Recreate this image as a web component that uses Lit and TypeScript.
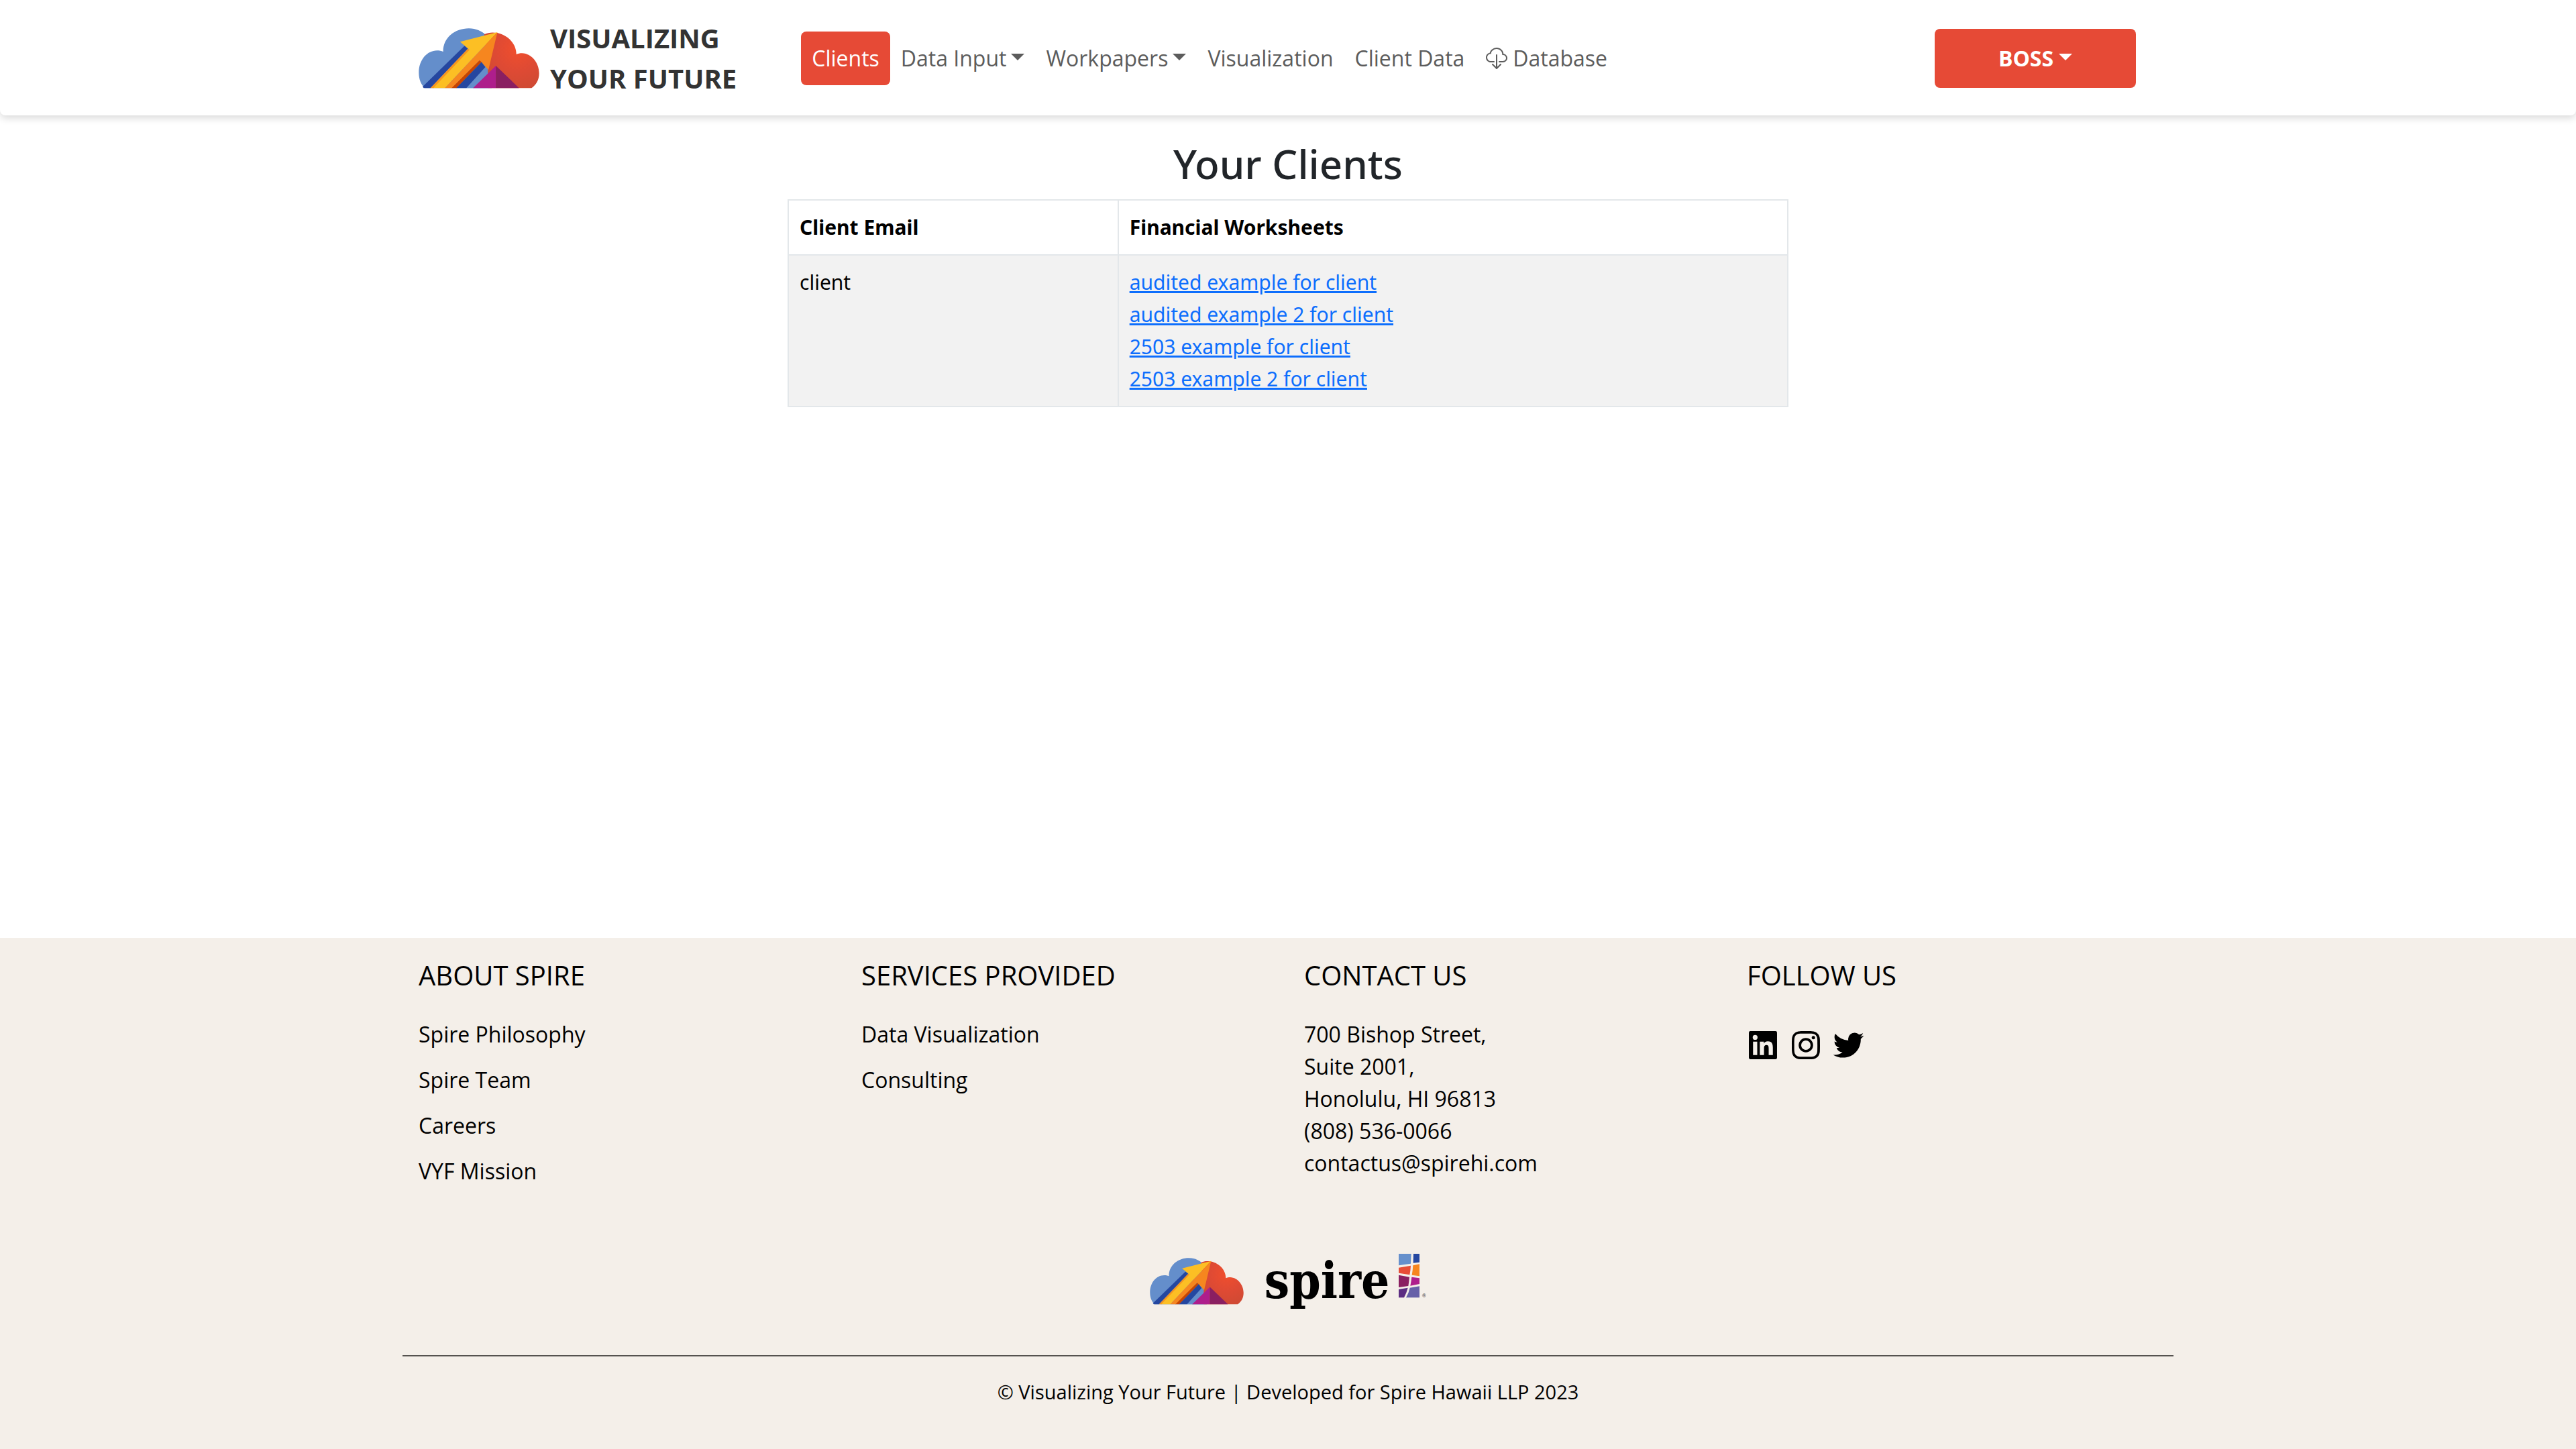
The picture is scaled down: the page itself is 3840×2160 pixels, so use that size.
import { LitElement, html, svg, css } from "lit";
import { customElement } from "lit/decorators.js";

const cloudShapes = svg`
  <defs>
    <radialGradient id="glow" cx="0.6" cy="0.3" r="0.8">
      <stop offset="0" stop-color="#f04e2d"></stop>
      <stop offset="0.5" stop-color="#de4a34"></stop>
      <stop offset="1" stop-color="#cc4a33"></stop>
    </radialGradient>
  </defs>
  <path fill="#648ecb" d="M100 331C82 315 73 290 73 262C73 205 110 163 155 163C165 163 174 165 182 168C182 105 235 64 297 64C330 64 355 77 372 92L400 200V331Z"></path>
  <path fill="url(#glow)" d="M366 91C385 82 400 81 425 84C475 95 510 135 510 180C518 177 526 175 535 175C580 177 612 220 612 265C612 295 598 318 578 331H382V200Z"></path>
  <path fill="#648ecb" d="M371 237L382 247V331H286Z"></path>
  <path fill="#2547a0" d="M90 325L278 142L293 155L125 331H95Z"></path>
  <path fill="#f7941e" d="M125 331L293 155L302 160L140 331Z"></path>
  <path fill="#fcbf24" d="M258 124L425 81L190 331H138L300 160Z"></path>
  <path fill="#f6861f" d="M425 81L385 249L345 207L222 331H190Z"></path>
  <path fill="#c84400" d="M345 207L354 215L242 331H220Z"></path>
  <path fill="#2547a0" d="M354 215L371 237L286 331H241Z"></path>
  <path fill="#ae1e8c" d="M418 231L316 331H418Z"></path>
  <path fill="#8a1f61" d="M418 231L522 331H418Z"></path>
`;

@customElement("cloud-logo")
export class CloudLogo extends LitElement {
  static styles = css`
    :host { display: block; }
    .art { display: block; width: 100%; height: auto; }
  `;
  render() {
    return html`<svg class="art" viewBox="72 63 541 269" aria-hidden="true">${cloudShapes}</svg>`;
  }
}

@customElement("site-header")
export class SiteHeader extends LitElement {
  static styles = css`
    :host { display: block; }
    .bar {
      background: #fff;
      border-radius: 0 0 8px 8px;
      box-shadow: 0 4px 12px rgba(0, 0, 0, 0.15);
      padding: 27px 0 25px;
    }
    .inner {
      display: flex;
      align-items: center;
      box-sizing: border-box;
      max-width: 2640px;
      margin: 0 auto;
      padding: 0 56px 0 24px;
    }
    .brand {
      display: flex;
      align-items: center;
      gap: 16px;
      margin-right: 96px;
      color: #333;
      font-size: 40px;
      line-height: 60px;
      font-weight: 700;
      text-decoration: none;
    }
    .mark { width: 180px; }
    .nav { display: flex; flex: 1; align-items: center; }
    .link {
      display: flex;
      align-items: center;
      gap: 8px;
      padding: 16px;
      border: 0;
      border-radius: 8px;
      background: none;
      color: #5c5c5c;
      font: inherit;
      line-height: 48px;
      text-decoration: none;
      white-space: nowrap;
    }
    .menu { gap: 7px; }
    .active { background: #e64a36; color: #fff; }
    .caret {
      width: 0;
      border: 10px solid transparent;
      border-top-color: currentColor;
      border-bottom: 0;
      margin-bottom: 4px;
    }
    .user {
      display: flex;
      align-items: center;
      justify-content: center;
      gap: 8px;
      width: 300px;
      height: 88px;
      border: 0;
      border-radius: 8px;
      background: #e64a36;
      color: #fff;
      font: inherit;
      font-weight: 700;
    }
    .icon { width: 32px; height: 32px; fill: currentColor; }
  `;
  render() {
    return html`
      <header class="bar">
        <div class="inner">
          <a class="brand" href="#">
            <cloud-logo class="mark"></cloud-logo>
            <span>VISUALIZING<br />YOUR FUTURE</span>
          </a>
          <nav class="nav">
            <a class="link active" href="#clients">Clients</a>
            <button class="link menu" type="button">Data Input<span class="caret"></span></button>
            <button class="link menu" type="button">Workpapers<span class="caret"></span></button>
            <a class="link" href="#visualization">Visualization</a>
            <a class="link" href="#client-data">Client Data</a>
            <a class="link" href="#database">
              <svg class="icon" viewBox="0 0 16 16" aria-hidden="true">
                <path d="M4.406 1.342A5.53 5.53 0 0 1 8 0c2.69 0 4.923 2 5.166 4.579C14.758 4.804 16 6.137 16 7.773 16 9.569 14.502 11 12.687 11H10a.5.5 0 0 1 0-1h2.688C13.979 10 15 8.988 15 7.773c0-1.216-1.02-2.228-2.313-2.228h-.5v-.5C12.188 2.825 10.328 1 8 1a4.53 4.53 0 0 0-2.941 1.1c-.757.652-1.153 1.438-1.153 2.055v.448l-.445.049C2.064 4.805 1 5.952 1 7.318 1 8.785 2.23 10 3.781 10H6a.5.5 0 0 1 0 1H3.781C1.708 11 0 9.366 0 7.318c0-1.763 1.266-3.223 2.942-3.593.143-.863.698-1.723 1.464-2.383z"></path>
                <path d="M7.646 15.854a.5.5 0 0 0 .708 0l3-3a.5.5 0 0 0-.708-.708L8.5 14.293V5.5a.5.5 0 0 0-1 0v8.793l-2.146-2.147a.5.5 0 0 0-.708.708l3 3z"></path>
              </svg>
              Database
            </a>
          </nav>
          <button class="user" type="button">BOSS<span class="caret"></span></button>
        </div>
      </header>
    `;
  }
}

const worksheets = [
  "audited example for client",
  "audited example 2 for client",
  "2503 example for client",
  "2503 example 2 for client",
];

@customElement("client-list")
export class ClientList extends LitElement {
  static styles = css`
    :host {
      display: block;
      font-family: "Segoe UI", "Noto Sans", sans-serif;
      font-size: 30px;
    }
    .wrap {
      max-width: 1492px;
      margin: 0 auto;
      padding: 34px 0;
    }
    .title {
      margin: 0 0 14px;
      color: #212529;
      font-size: 60px;
      font-weight: 500;
      line-height: 77px;
      text-align: center;
    }
    .grid {
      width: 100%;
      border-collapse: collapse;
      color: #000;
    }
    .cell {
      padding: 16px;
      border: 2px solid #e3e7ea;
      text-align: left;
      vertical-align: top;
    }
    .email { width: 33%; box-sizing: border-box; }
    .row { background: #f2f2f2; }
    .sheets { margin: 0; padding: 0; list-style: none; }
    .sheet { color: #0d6efd; }
  `;
  render() {
    return html`
      <main class="wrap">
        <h1 class="title">Your Clients</h1>
        <table class="grid">
          <thead>
            <tr>
              <th class="cell email" scope="col">Client Email</th>
              <th class="cell" scope="col">Financial Worksheets</th>
            </tr>
          </thead>
          <tbody>
            <tr class="row">
              <td class="cell">client</td>
              <td class="cell">
                <ul class="sheets">
                  ${worksheets.map((name) => html`<li><a class="sheet" href="#sheet">${name}</a></li>`)}
                </ul>
              </td>
            </tr>
          </tbody>
        </table>
      </main>
    `;
  }
}

@customElement("site-footer")
export class SiteFooter extends LitElement {
  static styles = css`
    :host { display: block; }
    .foot {
      background: #f4efe9;
      color: #000;
      padding: 32px 0 64px;
    }
    .inner { max-width: 2640px; margin: 0 auto; }
    .columns {
      display: grid;
      grid-template-columns: repeat(4, 1fr);
      min-height: 334px;
    }
    .column { padding-left: 24px; }
    .heading {
      margin: 0 0 40px;
      font-size: 40px;
      font-weight: 500;
      line-height: 48px;
    }
    .list {
      display: flex;
      flex-direction: column;
      gap: 20px;
      margin: 0;
      padding: 0;
      list-style: none;
    }
    .item { color: inherit; text-decoration: none; }
    .address { margin: 0; font-style: normal; }
    .social { display: flex; gap: 16px; padding-top: 16px; }
    .badge { display: block; width: 48px; height: 48px; fill: #000; }
    .logos {
      display: flex;
      align-items: center;
      justify-content: center;
      gap: 32px;
      height: 96px;
      padding: 92px 0 62px;
    }
    .mark { width: 140px; }
    .spire { display: block; width: 240px; height: 87px; }
    .word { font-family: "DejaVu Serif Condensed", "DejaVu Serif", serif; font-weight: 700; font-size: 222px; }
    .reg { font-family: "Liberation Sans", sans-serif; font-size: 24px; fill: #333; }
    .rule { margin: 0; border: 0; border-top: 2px solid #55524f; }
    .copy { margin: 32px 0 0; font-size: 29px; line-height: 42px; text-align: center; }
  `;
  render() {
    return html`
      <footer class="foot">
        <div class="inner">
          <div class="columns">
            <section class="column">
              <h2 class="heading">ABOUT SPIRE</h2>
              <ul class="list">
                ${["Spire Philosophy", "Spire Team", "Careers", "VYF Mission"].map(
                  (t) => html`<li><a class="item" href="#about">${t}</a></li>`
                )}
              </ul>
            </section>
            <section class="column">
              <h2 class="heading">SERVICES PROVIDED</h2>
              <ul class="list">
                ${["Data Visualization", "Consulting"].map(
                  (t) => html`<li><a class="item" href="#services">${t}</a></li>`
                )}
              </ul>
            </section>
            <section class="column">
              <h2 class="heading">CONTACT US</h2>
              <address class="address">
                700 Bishop Street,<br />Suite 2001,<br />Honolulu, HI 96813<br />(808) 536-0066<br />contactus@spirehi.com
              </address>
            </section>
            <section class="column">
              <h2 class="heading">FOLLOW US</h2>
              <div class="social">
                <a href="#linkedin" aria-label="LinkedIn">
                  <svg class="badge" viewBox="1.7 1.7 20.6 20.6"><path d="M20 3H4a1 1 0 0 0-1 1v16a1 1 0 0 0 1 1h16a1 1 0 0 0 1-1V4a1 1 0 0 0-1-1zM8.339 18.337H5.667v-8.59h2.672v8.59zM7.003 8.574a1.548 1.548 0 1 1 0-3.096 1.548 1.548 0 0 1 0 3.096zm11.335 9.763h-2.669V14.16c0-.996-.018-2.277-1.388-2.277-1.39 0-1.601 1.086-1.601 2.207v4.248h-2.667v-8.59h2.56v1.174h.037c.355-.675 1.227-1.387 2.524-1.387 2.704 0 3.203 1.778 3.203 4.092v4.71z"></path></svg>
                </a>
                <a href="#instagram" aria-label="Instagram">
                  <svg class="badge" viewBox="1.7 1.7 20.6 20.6"><path d="M11.999 7.377a4.623 4.623 0 1 0 0 9.248 4.623 4.623 0 0 0 0-9.248zm0 7.627a3.004 3.004 0 1 1 0-6.008 3.004 3.004 0 0 1 0 6.008z"></path><circle cx="16.806" cy="7.207" r="1.078"></circle><path d="M20.533 6.111A4.605 4.605 0 0 0 17.9 3.479a6.606 6.606 0 0 0-2.186-.42c-.963-.042-1.268-.054-3.71-.054s-2.755 0-3.71.054a6.554 6.554 0 0 0-2.184.42 4.6 4.6 0 0 0-2.633 2.632 6.585 6.585 0 0 0-.419 2.186c-.043.962-.056 1.267-.056 3.71 0 2.442 0 2.753.056 3.71.015.748.156 1.486.419 2.187a4.61 4.61 0 0 0 2.634 2.632 6.584 6.584 0 0 0 2.185.45c.963.042 1.268.055 3.71.055s2.755 0 3.71-.055a6.615 6.615 0 0 0 2.186-.419 4.613 4.613 0 0 0 2.633-2.633c.263-.7.404-1.438.419-2.186.043-.962.056-1.267.056-3.71s0-2.753-.056-3.71a6.581 6.581 0 0 0-.421-2.217zm-1.218 9.532a5.043 5.043 0 0 1-.311 1.688 2.987 2.987 0 0 1-1.712 1.711 4.985 4.985 0 0 1-1.67.311c-.95.044-1.218.055-3.654.055-2.438 0-2.687 0-3.655-.055a4.96 4.96 0 0 1-1.669-.311 2.985 2.985 0 0 1-1.719-1.711 5.08 5.08 0 0 1-.311-1.669c-.043-.95-.053-1.218-.053-3.654 0-2.437 0-2.686.053-3.655a5.038 5.038 0 0 1 .311-1.687c.305-.789.93-1.41 1.719-1.712a5.01 5.01 0 0 1 1.669-.311c.951-.043 1.218-.055 3.655-.055s2.687 0 3.654.055a4.96 4.96 0 0 1 1.67.311 2.991 2.991 0 0 1 1.712 1.712 5.08 5.08 0 0 1 .311 1.669c.043.951.055 1.218.055 3.655 0 2.436 0 2.698-.043 3.654h-.011z"></path></svg>
                </a>
                <a href="#twitter" aria-label="Twitter">
                  <svg class="badge" viewBox="1.7 1.7 20.6 20.6"><path d="M19.633 7.997c.013.175.013.349.013.523 0 5.325-4.053 11.461-11.46 11.461-2.282 0-4.402-.661-6.186-1.809.324.037.636.05.973.05a8.07 8.07 0 0 0 5.001-1.721 4.036 4.036 0 0 1-3.767-2.793c.249.037.499.062.761.062.361 0 .724-.05 1.061-.137a4.027 4.027 0 0 1-3.23-3.953v-.05c.537.299 1.16.486 1.82.511a4.022 4.022 0 0 1-1.796-3.354c0-.748.199-1.434.548-2.032a11.457 11.457 0 0 0 8.306 4.215c-.062-.3-.1-.611-.1-.923a4.026 4.026 0 0 1 4.028-4.028c1.16 0 2.207.486 2.943 1.272a7.957 7.957 0 0 0 2.556-.973 4.02 4.02 0 0 1-1.771 2.22 8.073 8.073 0 0 0 2.319-.624 8.645 8.645 0 0 1-2.019 2.083z"></path></svg>
                </a>
              </div>
            </section>
          </div>
          <div class="logos">
            <cloud-logo class="mark"></cloud-logo>
            <svg class="spire" viewBox="588 52 720 261">
              <text class="word" x="584" y="255">spire</text>
              <path fill="#6690cc" d="M1185 58H1241L1239 102L1185 110Z"></path>
              <path fill="#2547a0" d="M1251 58H1278V96L1250 99Z"></path>
              <path fill="#e84d37" d="M1185 120L1239 111Q1238 132 1234 152L1185 144Z"></path>
              <path fill="#f6861f" d="M1249 110L1278 104V158L1244 153Q1248 132 1249 110Z"></path>
              <path fill="#8a1f61" d="M1185 153L1233 162Q1231 183 1228 202L1185 208Z"></path>
              <path fill="#ae1e8c" d="M1243 162L1278 167V193L1237 201Q1241 182 1243 162Z"></path>
              <path fill="#5c2d82" d="M1185 217L1226 210Q1220 234 1209 254H1185Z"></path>
              <path fill="#6660a8" d="M1235 210L1278 203V254H1218Q1230 234 1235 210Z"></path>
              <text class="reg" x="1290" y="253">®</text>
            </svg>
          </div>
          <hr class="rule" />
          <p class="copy">© Visualizing Your Future | Developed for Spire Hawaii LLP 2023</p>
        </div>
      </footer>
    `;
  }
}

@customElement("app-root")
export class AppRoot extends LitElement {
  static styles = css`
    :host {
      display: flex;
      flex-direction: column;
      min-height: 100vh;
      background: #fff;
      font-family: "Open Sans", "Noto Sans", sans-serif;
      font-size: 32px;
      line-height: 48px;
    }
    .content { flex: 1; }
  `;
  render() {
    return html`
      <site-header></site-header>
      <client-list class="content"></client-list>
      <site-footer></site-footer>
    `;
  }
}
